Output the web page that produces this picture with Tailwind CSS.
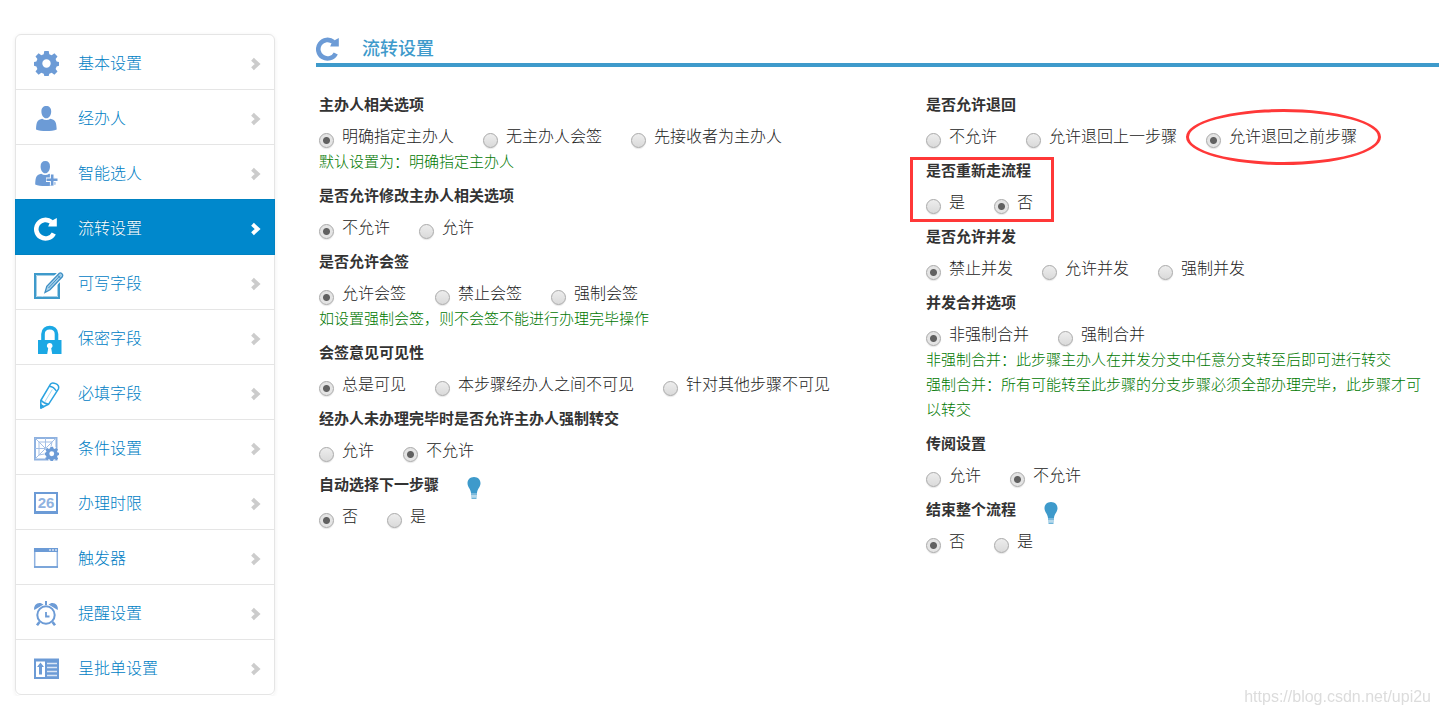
<!DOCTYPE html>
<html lang="zh-CN">
<head>
  <meta charset="UTF-8" />
  <meta name="viewport" content="width=device-width, initial-scale=1.0"/>
  <title>流转设置</title>
  <script src="https://cdn.jsdelivr.net/npm/@tailwindcss/browser@4"></script>
</head>
<body class="bg-white font-['Liberation_Sans','Noto_Sans_CJK_SC',sans-serif] font-light text-[#222]">

  <!-- Shared shapes -->
  <svg class="hidden" aria-hidden="true">
    <symbol id="chevron" viewBox="0 0 12 14">
      <path d="M2.5 2.3 7.6 7 2.5 11.7" fill="none" stroke="currentColor" stroke-width="4"/>
    </symbol>
    <symbol id="refresh" viewBox="0 0 24 24">
      <path d="M19.800 16.500A9.300 9.300 0 1 1 17.500 5" fill="none" stroke="currentColor" stroke-width="4.600"/>
      <path d="M22.800 1v8.500h-8.600l1-2.500 3-3.500z" fill="currentColor"/>
    </symbol>
    <symbol id="gear" viewBox="0 0 25 25">
      <path fill="currentColor" fill-rule="evenodd" d="M10.3 0h4.4l.6 3.200 2.400 1 2.700-1.900 3.100 3.100-1.900 2.700 1 2.400 2.400.4v3.800l-2.400.8-1 2.400 1.900 2.700-3.100 3.100-2.700-1.900-2.400 1-.6 2.200h-4.400l-.6-2.200-2.400-1-2.700 1.900-3.100-3.100 1.900-2.700-1-2.400-2.400-.8v-3.800l2.400-.4 1-2.400-1.900-2.700 3.100-3.100 2.700 1.900 2.400-1zM12.500 8.300a4.200 4.200 0 1 0 0 8.400 4.200 4.200 0 1 0 0-8.400z"/>
    </symbol>
    <symbol id="bulb" viewBox="0 0 14 22">
      <path fill="#3e9acb" d="M7 0c4 0 6.500 2.800 6.500 6.300 0 3.700-3.200 5.700-3.500 9.700H4C3.700 12 .5 10 .5 6.300.5 2.800 3 0 7 0z"/>
      <path fill="#7ab9dc" d="M4 16h6v2H4z"/>
      <path fill="#b5d8ea" d="M4 18h6v2.500H4z"/>
      <path fill="#6db3d8" d="M4.500 20.500h5V22h-5z"/>
    </symbol>
  </svg>

  <div class="flex items-start gap-[41px] pl-[15px] pt-[34px]">

    <!-- Side navigation -->
    <nav class="w-[260px] shrink-0">
      <ul class="rounded-md pb-px shadow-[0_1px_4px_rgba(0,0,0,0.07)] text-base text-[#0080c4] [&_a]:flex [&_a]:h-14 [&_a]:items-center [&_a]:gap-3 [&_a]:border [&_a]:border-[#e5e5e5] [&_a]:-mb-px [&_a]:pl-[18px] [&_a]:pr-3 [&_a>svg:last-child]:mt-[3px] [&_span]:pt-[3px]">
        <li>
          <a href="#basic" class="rounded-t-md">
            <svg class="size-8 overflow-visible text-[#6c9bd6]" viewBox="0 0 32 32"><use href="#gear" x="0" y="5" width="25" height="25"/></svg>
            <span class="flex-1">基本设置</span>
            <svg class="h-3.5 w-3 text-[#ccc]"><use href="#chevron"/></svg>
          </a>
        </li>
        <li>
          <a href="#handler">
            <svg class="size-8 overflow-visible" viewBox="0 0 32 32" fill="#6c9bd6">
              <path d="M12.300 5c3 0 4.900 2 4.900 5.400 0 3.500-2 6.800-4.900 6.800s-4.900-3.300-4.900-6.800C7.400 7 9.300 5 12.300 5z"/>
              <path d="M8.200 17.800c2.400 1.700 5.800 1.700 8.200 0 4.600 1.200 6 2.600 6.300 10.700-5 2-15.800 2-20.700 0 .3-8.100 1.600-9.500 6.200-10.700z"/>
            </svg>
            <span class="flex-1">经办人</span>
            <svg class="h-3.5 w-3 text-[#ccc]"><use href="#chevron"/></svg>
          </a>
        </li>
        <li>
          <a href="#smart">
            <svg class="size-8 overflow-visible" viewBox="0 0 32 32" fill="#6c9bd6">
              <path d="M11.300 5c3 0 4.700 2 4.700 5.400 0 3.500-1.900 6.800-4.700 6.800s-4.700-3.300-4.700-6.800C6.600 7 8.300 5 11.300 5z"/>
              <path d="M7.200 17.800c2.400 1.700 5.600 1.700 8 0 4.600 1.200 6 2.600 6.300 10.700-5 2-15.400 2-20.300 0 .3-8.100 1.400-9.500 6-10.700z"/>
              <path d="M18.200 17.500v12M12 23.800h12" stroke="#fff" stroke-width="4.600"/>
              <path d="M18.200 18.500v11M12.500 23.800h11" stroke="#6c9bd6" stroke-width="2.600"/>
            </svg>
            <span class="flex-1">智能选人</span>
            <svg class="h-3.5 w-3 text-[#ccc]"><use href="#chevron"/></svg>
          </a>
        </li>
        <li>
          <a href="#transfer" class="relative border-[#0082c2]! bg-[#0088cc] text-white text-shadow-[0_-1px_0_rgba(0,0,0,0.2)]">
            <svg class="size-8 overflow-visible" viewBox="0 0 32 32"><use href="#refresh" x="0" y="6" width="24" height="24"/></svg>
            <span class="flex-1">流转设置</span>
            <svg class="h-3.5 w-3"><use href="#chevron"/></svg>
          </a>
        </li>
        <li>
          <a href="#writable">
            <svg class="size-8 overflow-visible" viewBox="0 0 32 32" fill="none">
              <path d="M1 8h24v24H1z" stroke="#3e9acb" stroke-width="2"/>
              <path d="M2.500 9.500h21v21h-21z" stroke="#a5cfe6"/>
              <path d="M11 26.500l1.800-6.200L25.300 7.200c1.600-1 4.400 1.300 3.200 3.300L16 23.700z" fill="#7dbbe0" stroke="#fff" stroke-width="4"/>
              <path d="M11 26.500l1.800-6.200L25.300 7.200c1.600-1 4.400 1.300 3.200 3.300L16 23.700z" fill="#a7d0ea" stroke="#3e8fc4" stroke-width="1.300"/>
              <path d="M14.500 22 26 9.700M23.500 9.200l3 3" stroke="#3e8fc4"/>
            </svg>
            <span class="flex-1">可写字段</span>
            <svg class="h-3.5 w-3 text-[#ccc]"><use href="#chevron"/></svg>
          </a>
        </li>
        <li>
          <a href="#secret">
            <svg class="size-8 overflow-visible" viewBox="0 0 32 32">
              <path d="M9 19v-6c0-8.500 13.500-8.500 13.500 0v6" fill="none" stroke="#1ba8e4" stroke-width="3.600"/>
              <path d="M4 19h23.500v14H4z" fill="#1ba8e4"/>
              <path d="M15.700 22a2.800 2.800 0 0 1 1.500 5.200L18.200 33h-5l1-5.800a2.800 2.800 0 0 1 1.500-5.200z" fill="#fff"/>
            </svg>
            <span class="flex-1">保密字段</span>
            <svg class="h-3.5 w-3 text-[#ccc]"><use href="#chevron"/></svg>
          </a>
        </li>
        <li>
          <a href="#required">
            <svg class="size-8 overflow-visible" viewBox="0 0 32 32" fill="none" stroke="#2ba3e0" stroke-width="1.500" stroke-linejoin="round">
              <path d="M6.800 32v-7.500L16.500 8.200c1.500-2.500 9.500-.5 8 4.600L14.500 28.300z"/>
              <path d="M7 24.300c2 2.500 4.500 3.600 7.500 4M15.300 10.200c2.500.3 5.300 1.800 7 4.800" />
              <path d="M18.300 13.500 10.700 26" stroke="#a5daf3" stroke-width="1"/>
              <path d="M6.800 32v-3.500l3 2z" fill="#2ba3e0"/>
            </svg>
            <span class="flex-1">必填字段</span>
            <svg class="h-3.5 w-3 text-[#ccc]"><use href="#chevron"/></svg>
          </a>
        </li>
        <li>
          <a href="#condition">
            <svg class="size-8 overflow-visible text-[#6c9bd6]" viewBox="0 0 32 32" fill="none">
              <path d="M1 7h21.500v21.500H1z" stroke="#8fb2e0" stroke-width="2"/>
              <path d="M1 7l21 21M22 7 1 28M11.500 7v21M1 17.500h21M5 11h13l-2.500 11L5 24z" stroke="#a3bfe6"/>
              <circle cx="17.500" cy="22.500" r="7.500" fill="#fff"/>
              <use href="#gear" x="10.500" y="15.500" width="14.500" height="14.500"/>
            </svg>
            <span class="flex-1">条件设置</span>
            <svg class="h-3.5 w-3 text-[#ccc]"><use href="#chevron"/></svg>
          </a>
        </li>
        <li>
          <a href="#limit">
            <svg class="size-8 overflow-visible" viewBox="0 0 32 32">
              <path d="M1 7h22v19.500H1z" fill="none" stroke="#6c9bd6" stroke-width="2"/>
              <path d="M0 26.500h24" stroke="#6c9bd6" stroke-width="3"/>
              <text x="12" y="22" text-anchor="middle" font-family="Liberation Sans, sans-serif" font-size="15" font-weight="bold" fill="#8fb2e0">26</text>
            </svg>
            <span class="flex-1">办理时限</span>
            <svg class="h-3.5 w-3 text-[#ccc]"><use href="#chevron"/></svg>
          </a>
        </li>
        <li>
          <a href="#trigger">
            <svg class="size-8 overflow-visible" viewBox="0 0 32 32">
              <path d="M.7 8h22.600v18H.7z" fill="none" stroke="#8fb2e0" stroke-width="1.500"/>
              <path d="M0 7h24v4H0z" fill="#6c9bd6"/>
              <path d="M15 9h8" stroke="#d5e2f4" stroke-width="1.500" stroke-dasharray="2 1"/>
              <path d="M0 26h24" stroke="#6c9bd6" stroke-width="1.500"/>
            </svg>
            <span class="flex-1">触发器</span>
            <svg class="h-3.5 w-3 text-[#ccc]"><use href="#chevron"/></svg>
          </a>
        </li>
        <li>
          <a href="#remind">
            <svg class="size-8 overflow-visible" viewBox="0 0 32 32" fill="none" stroke="#6c9bd6">
              <circle cx="12" cy="19" r="8.700" stroke-width="2"/>
              <path d="M12 16v4.500h3.500" stroke-width="1.800"/>
              <path d="M12 5v4" stroke-width="2"/>
              <path d="M.3 14C-1 8.500 5 4.500 9.500 8.500zM23.700 14c1.300-5.500-4.700-9.500-9.200-5.500z" fill="#6c9bd6" stroke="none"/>
              <path d="M5.500 26 3 29.300M18.500 26l2.500 3.300" stroke-width="2.600"/>
            </svg>
            <span class="flex-1">提醒设置</span>
            <svg class="h-3.5 w-3 text-[#ccc]"><use href="#chevron"/></svg>
          </a>
        </li>
        <li>
          <a href="#approval" class="mb-0! rounded-b-md">
            <svg class="size-8 overflow-visible" viewBox="0 0 32 32">
              <path d="M0 7.500h25V28H0z" fill="#6c9bd6"/>
              <path d="M2 10.500h9V26H2z" fill="#fff"/>
              <path d="M6.500 11.500 10 16H8v7.500H5V16H3z" fill="#6c9bd6"/>
              <path d="M13 12.500h10M13 16.500h10M13 20.500h10M13 24.500h10" stroke="#dbe6f5" stroke-width="1.500"/>
            </svg>
            <span class="flex-1">呈批单设置</span>
            <svg class="h-3.5 w-3 text-[#ccc]"><use href="#chevron"/></svg>
          </a>
        </li>
      </ul>
    </nav>

    <main class="min-w-0 flex-1">
      <header class="flex h-[33px] items-center gap-[22px] border-b-4 border-[#3e9acb]">
        <svg class="size-6 text-[#6c9bd6]"><use href="#refresh"/></svg>
        <h1 class="text-lg font-medium text-[#3e9acb]">流转设置</h1>
      </header>

      <!-- Options -->
      <form class="mt-[26px] grid grid-cols-[607fr_513fr] pl-[3px] text-base leading-6 [&_fieldset]:relative [&_fieldset]:mb-2.5 [&_legend]:text-[15px] [&_legend]:font-bold [&_legend]:text-[#333] [&_fieldset>div]:mt-2 [&_fieldset>div]:flex [&_fieldset>div]:flex-wrap [&_fieldset>div]:gap-x-[29px] [&_label]:relative [&_label]:flex [&_label]:h-6 [&_label]:items-center [&_label]:gap-2 [&_p]:text-[15px] [&_p]:leading-[25px] [&_p]:text-[#007800] [&_input]:mt-1.5 [&_input]:size-[15px] [&_input]:appearance-none [&_input]:rounded-full [&_input]:border [&_input]:border-[#a9a9a9] [&_input]:bg-linear-to-b [&_input]:from-[#ededed] [&_input]:to-[#dadada] [&_input]:shadow-[0_1px_1px_rgba(0,0,0,0.1)] [&_input:checked]:bg-[radial-gradient(circle,#616161_3px,#e4e4e4_4px)]">
        <div>
          <fieldset>
            <legend>主办人相关选项</legend>
            <div>
              <label><input type="radio" name="host" checked>明确指定主办人</label>
              <label><input type="radio" name="host">无主办人会签</label>
              <label><input type="radio" name="host">先接收者为主办人</label>
            </div>
            <p>默认设置为：明确指定主办人</p>
          </fieldset>
          <fieldset>
            <legend>是否允许修改主办人相关选项</legend>
            <div>
              <label><input type="radio" name="hostEdit" checked>不允许</label>
              <label><input type="radio" name="hostEdit">允许</label>
            </div>
          </fieldset>
          <fieldset>
            <legend>是否允许会签</legend>
            <div>
              <label><input type="radio" name="sign" checked>允许会签</label>
              <label><input type="radio" name="sign">禁止会签</label>
              <label><input type="radio" name="sign">强制会签</label>
            </div>
            <p>如设置强制会签，则不会签不能进行办理完毕操作</p>
          </fieldset>
          <fieldset>
            <legend>会签意见可见性</legend>
            <div>
              <label><input type="radio" name="visible" checked>总是可见</label>
              <label><input type="radio" name="visible">本步骤经办人之间不可见</label>
              <label><input type="radio" name="visible">针对其他步骤不可见</label>
            </div>
          </fieldset>
          <fieldset>
            <legend>经办人未办理完毕时是否允许主办人强制转交</legend>
            <div>
              <label><input type="radio" name="force">允许</label>
              <label><input type="radio" name="force" checked>不允许</label>
            </div>
          </fieldset>
          <fieldset>
            <legend><span class="flex h-6 gap-7">自动选择下一步骤 <svg class="mt-1 h-[22px] w-3.5"><use href="#bulb"/></svg></span></legend>
            <div>
              <label><input type="radio" name="auto" checked>否</label>
              <label><input type="radio" name="auto">是</label>
            </div>
          </fieldset>
        </div>

        <div class="pr-2">
          <fieldset>
            <legend>是否允许退回</legend>
            <div>
              <label><input type="radio" name="back">不允许</label>
              <label><input type="radio" name="back">允许退回上一步骤</label>
              <label><input type="radio" name="back" checked>允许退回之前步骤
                <span class="pointer-events-none absolute -inset-y-4 -left-5 -right-6 rounded-[50%] border-3 border-[#ff3838]"></span>
              </label>
            </div>
          </fieldset>
          <fieldset>
            <legend>是否重新走流程</legend>
            <div>
              <label><input type="radio" name="restart">是</label>
              <label><input type="radio" name="restart" checked>否</label>
            </div>
            <span class="pointer-events-none absolute -bottom-[7px] -left-4 -top-[26px] w-36 border-3 border-[#ff3838]"></span>
          </fieldset>
          <fieldset>
            <legend>是否允许并发</legend>
            <div>
              <label><input type="radio" name="parallel" checked>禁止并发</label>
              <label><input type="radio" name="parallel">允许并发</label>
              <label><input type="radio" name="parallel">强制并发</label>
            </div>
          </fieldset>
          <fieldset>
            <legend>并发合并选项</legend>
            <div>
              <label><input type="radio" name="merge" checked>非强制合并</label>
              <label><input type="radio" name="merge">强制合并</label>
            </div>
            <p>非强制合并：此步骤主办人在并发分支中任意分支转至后即可进行转交</p>
            <p>强制合并：所有可能转至此步骤的分支步骤必须全部办理完毕，此步骤才可以转交</p>
          </fieldset>
          <fieldset>
            <legend>传阅设置</legend>
            <div>
              <label><input type="radio" name="circulate">允许</label>
              <label><input type="radio" name="circulate" checked>不允许</label>
            </div>
          </fieldset>
          <fieldset>
            <legend><span class="flex h-6 gap-7">结束整个流程 <svg class="mt-1 h-[22px] w-3.5"><use href="#bulb"/></svg></span></legend>
            <div>
              <label><input type="radio" name="end" checked>否</label>
              <label><input type="radio" name="end">是</label>
            </div>
          </fieldset>
        </div>
      </form>
    </main>
  </div>

  <div class="fixed bottom-1.5 right-2 text-base leading-6 text-[#dcdcdc]">https://blog.csdn.net/upi2u</div>
</body>
</html>
